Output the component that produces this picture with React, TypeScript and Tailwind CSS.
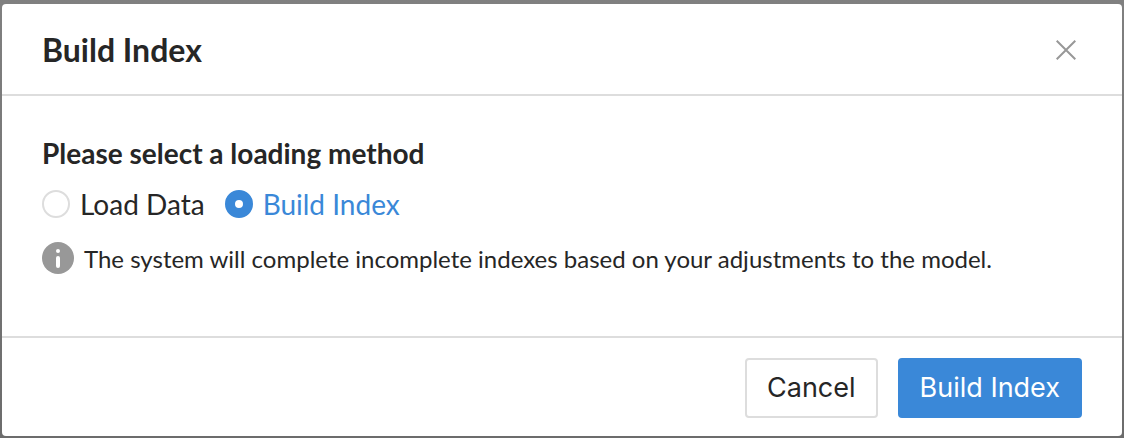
import { useState } from "react";

type Method = "load" | "build";

const METHODS: { value: Method; label: string }[] = [
  { value: "load", label: "Load Data" },
  { value: "build", label: "Build Index" },
];

function CloseIcon() {
  return (
    <svg width="20" height="20" viewBox="0 0 20 20" fill="none" stroke="#989898" strokeWidth="2" aria-hidden="true">
      <path d="M0.7 0.7 19.3 19.3M19.3 0.7 0.7 19.3" />
    </svg>
  );
}

function InfoIcon() {
  return (
    <svg className="shrink-0" width="32" height="32" viewBox="0 0 32 32" aria-hidden="true">
      <circle cx="16" cy="16" r="16" fill="#989898" />
      <circle cx="16" cy="9" r="2" fill="#fff" />
      <rect x="14" y="14" width="4" height="12" rx="2" fill="#fff" />
    </svg>
  );
}

export default function App() {
  const [method, setMethod] = useState<Method>("build");

  return (
    <div className="min-h-screen bg-linear-to-b from-[#808080] to-[#6c6c6c] px-[2px] pt-1 pb-[2px] font-[Lato,sans-serif]">
      <section role="dialog" aria-labelledby="dialog-title" className="rounded bg-white text-[#262626]">
        <header className="flex items-center justify-between border-b-2 border-[#dddddd] px-10 pt-[26px] pb-6">
          <h1 id="dialog-title" className="text-[32px] leading-[40px] font-bold">Build Index</h1>
          <button type="button" aria-label="Close" className="p-[6px]">
            <CloseIcon />
          </button>
        </header>

        <div className="px-10 pt-10 pb-15">
          <fieldset>
            <legend className="text-[28px] leading-[34px] font-bold">Please select a loading method</legend>
            <div className="flex items-center gap-5 pt-[14px]">
              {METHODS.map(({ value, label }) => (
                <label key={value} className="flex items-center gap-[10px] text-[28px] leading-[40px] has-checked:text-[#3a88d8]">
                  <input
                    type="radio"
                    name="method"
                    value={value}
                    checked={method === value}
                    onChange={() => setMethod(value)}
                    className="size-7 shrink-0 appearance-none rounded-full border-2 border-[#dddddd] bg-white checked:border-10 checked:border-[#3a88d8]"
                  />
                  {label}
                </label>
              ))}
            </div>
          </fieldset>
          <p className="flex items-start gap-[10px] pt-[18px] text-[24px] leading-[34px]">
            <InfoIcon />
            <span>The system will complete incomplete indexes based on your adjustments to the model.</span>
          </p>
        </div>

        <footer className="flex justify-end gap-5 border-t-2 border-[#dddddd] px-10 pt-5 pb-[18px] font-[Inter,sans-serif] text-[27px] leading-[56px]">
          <button type="button" className="rounded border-2 border-[#dddddd] bg-white px-5">Cancel</button>
          <button type="button" className="rounded border-2 border-[#3a88d8] bg-[#3a88d8] px-5 text-white">Build Index</button>
        </footer>
      </section>
    </div>
  );
}
